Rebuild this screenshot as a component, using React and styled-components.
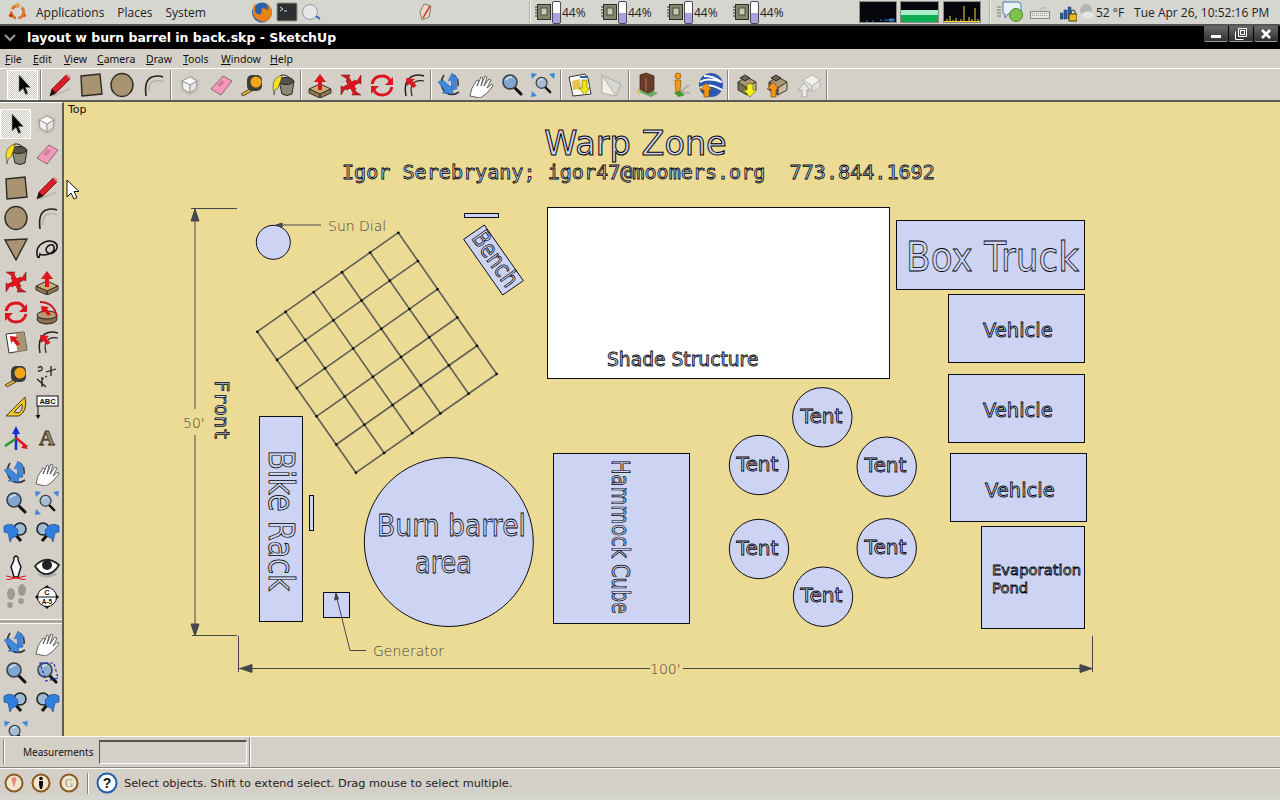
import React from "react";
import styled, { createGlobalStyle } from "styled-components";

const GlobalStyle = createGlobalStyle`
  html, body { margin: 0; padding: 0; height: 100%; overflow: hidden; background: #d6d6d0; }
  #root { height: 100%; }
`;

const Screen = styled.div`
  width: 1280px;
  height: 800px;
  display: flex;
  flex-direction: column;
  overflow: hidden;
  font-family: "DejaVu Sans", sans-serif;
  color: #111;
`;

/* ---- gnome panel ---- */
const Panel = styled.div`
  height: 24px;
  flex: none;
  display: flex;
  align-items: center;
  background: #d6d6d0;
  border-bottom: 2px solid #55554f;
  font-family: "Open Sans", sans-serif;
  font-size: 12px;
  color: #222;
`;
const PanelMenu = styled.span`
  margin-left: ${(p) => p.$left}px;
`;
const PanelIcon = styled.svg`
  flex: none;
  margin-left: ${(p) => p.$left || 0}px;
`;
const PanelSep = styled.div`
  width: 1px;
  height: 22px;
  flex: none;
  margin-left: ${(p) => p.$left}px;
  background: #aeaea8;
  border-right: 1px solid #f2f2ee;
`;
const Cpu = styled.div`
  width: 66px;
  flex: none;
  display: flex;
  align-items: center;
  gap: 1px;
  margin-left: ${(p) => p.$left || 0}px;
`;
const CpuBar = styled.div`
  width: 7px;
  height: 21px;
  border: 1px solid #4a4a58;
  border-radius: 2px;
  background: linear-gradient(#fff 0 52%, #a9a3dc 52% 100%);
`;
const Graph = styled.svg`
  flex: none;
  margin-left: ${(p) => p.$left}px;
  border: 1px solid #8c8c86;
  background: #05070c;
`;
const TrayText = styled.span`
  margin-left: ${(p) => p.$left}px;
  white-space: nowrap;
`;

/* ---- window frame ---- */
const TitleBar = styled.div`
  height: 23px;
  flex: none;
  display: flex;
  align-items: center;
  background: #000;
  color: #fff;
  font-weight: 700;
  font-size: 12.5px;
`;
const TitleChevron = styled.svg`
  margin: 0 11px 0 4px;
`;
const WinButtons = styled.div`
  margin-left: auto;
  margin-right: 2px;
  align-self: flex-start;
  display: flex;
  gap: 1px;
`;
const WinButton = styled.div`
  width: 24px;
  height: 15px;
  display: flex;
  align-items: center;
  justify-content: center;
  background: linear-gradient(#6a6a6a, #303030);
  border: solid #9a9a9a;
  border-width: 0 0 1px 0;
  border-radius: 0 0 2px 2px;
`;

const MenuBar = styled.div`
  height: 19px;
  flex: none;
  display: flex;
  align-items: center;
  background: #d4d0c8;
  border-bottom: 1px solid #fff;
  font-family: "Noto Sans", sans-serif;
  font-size: 10.5px;
`;
const MenuItem = styled.span`
  width: ${(p) => p.$w}px;
  flex: none;
  &:first-child { margin-left: 5px; }
  u { text-underline-offset: 1px; }
`;

const ToolBar = styled.div`
  height: 31px;
  flex: none;
  display: flex;
  align-items: center;
  padding-left: 7px;
  background: #d4d0c8;
  border-bottom: 2px solid #5c5a54;
`;
const ToolButton = styled.div`
  width: 31px;
  height: 30px;
  flex: none;
  display: flex;
  align-items: center;
  justify-content: center;
  box-sizing: border-box;
  ${(p) =>
    p.$active &&
    `
    border: 1px solid #fff;
    background: conic-gradient(#fff 25%, #c9c6bf 0 50%, #fff 0 75%, #c9c6bf 0) 0 0 / 2px 2px;
  `}
`;
const ToolSep = styled.div`
  width: 6px;
  height: 30px;
  flex: none;
  display: flex;
  justify-content: center;
  &::after {
    content: "";
    width: 1px;
    background: #85827b;
    border-right: 1px solid #fff;
  }
`;

const Main = styled.div`
  height: 634px;
  flex: none;
  display: flex;
`;
const LeftBar = styled.div`
  width: 62px;
  flex: none;
  display: flex;
  flex-direction: column;
  gap: 4px;
  padding-top: 6px;
  overflow: hidden;
  background: #d4d0c8;
  border-right: 2px solid #5c5a54;
  border-top: 1px solid #fff;
`;
const LeftGroup = styled.div`
  display: grid;
  grid-template-columns: 31px 31px;
  grid-auto-rows: ${(p) => p.$row || 30}px;
  flex: none;
`;
const LeftDivider = styled.div`
  height: 3px;
  flex: none;
  margin: 3px 0 0;
  border-top: 1px solid #fff;
  border-bottom: 1px solid #fff;
  background: #aaa69e;
`;
const Canvas = styled.div`
  flex: 1;
  position: relative;
  background: #ecdb94;
`;
const ViewName = styled.span`
  position: absolute;
  left: 4px;
  top: 1px;
  font-size: 11px;
`;
const Cursor = styled.svg`
  position: absolute;
  left: 2px;
  top: 77px;
`;
const Drawing = styled.svg`
  display: block;
  width: 100%;
  height: 100%;
`;

const Edge = styled.g`
  fill: #ccd3f3;
  stroke: #0c0c14;
  stroke-width: 1;
`;
const OutlineText = styled.text`
  font-family: ${(p) => (p.$mono ? '"DejaVu Sans Mono", monospace' : '"DejaVu Sans", sans-serif')};
  font-size: ${(p) => p.$size}px;
  fill: #ccd3f3;
  stroke: #000;
  stroke-width: ${(p) => p.$weight || 0.8}px;
`;
const Note = styled.text`
  font-family: "DejaVu Sans", sans-serif;
  font-weight: 200;
  font-size: 14px;
  fill: #45443e;
`;
const DimLine = styled.g`
  fill: none;
  stroke: #45474c;
  stroke-width: 1;
`;

/* ---- bottom bars ---- */
const MeasureBar = styled.div`
  height: 30px;
  flex: none;
  display: flex;
  align-items: center;
  background: #d4d0c8;
  border-top: 1px solid #fff;
  border-bottom: 1px solid #85827b;
  font-family: "Noto Sans", sans-serif;
  font-size: 10px;
`;
const Grip = styled.div`
  width: 1px;
  height: 26px;
  flex: none;
  margin-left: 3px;
  background: #85827b;
  border-right: 1px solid #fff;
`;
const MeasureLabel = styled.span`
  margin-left: 18px;
  width: 76px;
  flex: none;
`;
const MeasureInput = styled.div`
  width: 146px;
  height: 21px;
  flex: none;
  border: 1px solid;
  border-color: #55534e #fff #fff #55534e;
  border-top-width: 2px;
`;
const MeasureEnd = styled.div`
  width: 1px;
  height: 30px;
  flex: none;
  margin-left: 2px;
  background: #85827b;
  border-right: 1px solid #fff;
`;
const StatusBar = styled.div`
  height: 24px;
  padding-top: 2px;
  flex: none;
  display: flex;
  align-items: center;
  background: #d4d0c8;
  border-top: 1px solid #fff;
  font-size: 11.3px;
`;
const StatusSep = styled.div`
  width: 1px;
  height: 21px;
  flex: none;
  margin: 0 7px 0 2px;
  background: #85827b;
  border-right: 1px solid #fff;
`;
const StatusIcons = styled.svg`
  flex: none;
  margin-left: ${(p) => p.$left || 0}px;
`;
const StatusText = styled.span`
  margin-left: 6px;
  color: #222;
`;
const BottomStrip = styled.div`
  flex: 1;
  background: #d6d6d0;
`;

/* ---- toolbar icons ---- */
const Magnifier = ({ fill = "#7fa6cf" }) => (
  <>
    <path d="M15 15l7 7" stroke="#111" strokeWidth="3" strokeLinecap="round" />
    <circle cx="11" cy="10" r="7" fill={fill} stroke="#3b3f45" strokeWidth="1.6" />
    <path d="M7 8q2-3 6-3" stroke="#cfe2f4" strokeWidth="1.4" fill="none" />
  </>
);
const BlueArrows = () => (
  <g fill="#3f86dc">
    <path d="M1 1l6 1-5 5z" />
    <path d="M25 1l-6 1 5 5z" />
    <path d="M1 25l1-6 5 5z" />
  </g>
);
const Hand = () => (
  <path
    d="M2 24l2-8 5-8 2 1-2 5 4-9 2 1-2 8 4-10 2 1-3 9 5-7 2 1-4 8 5-4 1 2-7 8-6 4z"
    fill="#fff"
    stroke="#55575a"
    strokeWidth="0.9"
    strokeLinejoin="round"
  />
);
const BlueHand = ({ flip }) => (
  <g transform={flip ? "matrix(-1 0 0 1 26 0)" : undefined}>
    <circle cx="17" cy="9" r="6" fill="#9dbad6" stroke="#222" strokeWidth="1.6" />
    <path d="M11 13l7 8" stroke="#111" strokeWidth="3" />
    <path d="M1 6q4-3 9-1l5 5-1 6-5 2-2 4-2-9-4-1z" fill="#2f7fe0" stroke="#1b3d78" strokeWidth="0.6" />
  </g>
);
const Crate = () => (
  <>
    <path d="M4 10l9-5 9 5-9 6z" fill="#a89878" stroke="#3d3a33" />
    <path d="M4 10v8l9 5v-7z" fill="#7a6d55" stroke="#3d3a33" />
    <path d="M22 10v8l-9 5v-7z" fill="#c9bb9b" stroke="#3d3a33" />
    <path d="M6 6l5-3 5 3-5 3z" fill="#6f6350" stroke="#2d2a25" />
  </>
);

const ICONS = {
  select: <path d="M9 3v17l4-3.500 2.500 6 2.500-1-2.500-6h5z" fill="#000" stroke="#8d8b85" strokeWidth="0.7" />,
  box: (
    <>
      <path d="M3 9l11-6 9 5-2 12-9 4-8-5z" fill="#c6c4bd" />
      <path d="M5 9l8-4 7 4-7 4z" fill="#fff" stroke="#9a9890" />
      <path d="M5 9l1 8 7 4v-8z" fill="#f2f2f2" stroke="#9a9890" />
      <path d="M20 9l-1 8-6 4v-8z" fill="#e4e4e4" stroke="#9a9890" />
    </>
  ),
  eraser: (
    <>
      <path d="M3 17L15 4l9 5-11 14z" fill="#f49ab8" stroke="#6d5560" strokeWidth="0.8" />
      <path d="M9 13l5-5 3 2-5 5z" fill="#d07c98" />
    </>
  ),
  tape: (
    <>
      <path d="M2 22l10-6 1 3-9 5z" fill="#e0b020" stroke="#333" strokeWidth="0.8" />
      <rect x="8" y="3" width="15" height="16" rx="5" fill="#3c3c38" />
      <circle cx="17" cy="10" r="5.500" fill="#f2a718" />
    </>
  ),
  paint: (
    <>
      <path d="M9 9h15l-2 13q-5 3-10 0z" fill="#8d8775" stroke="#2d2d2a" />
      <ellipse cx="16" cy="9" rx="7.500" ry="3.500" fill="#55534a" stroke="#222" />
      <path d="M10 4q4-3 10 2" fill="none" stroke="#222" />
      <path d="M12 3Q3 6 3 14l1 9 1-5 3-2 3-8z" fill="#f8e11a" stroke="#222" strokeWidth="0.5" />
    </>
  ),
  pencil: (
    <>
      <path d="M6 24l17-7" stroke="#b8b5ad" strokeWidth="1.4" />
      <path d="M3 24l2-7L19 3l4 4L9 21z" fill="#d81f26" stroke="#5a1013" strokeWidth="0.7" />
      <path d="M3 24l2-7 4 4z" fill="#161616" />
      <path d="M19 3l4 4 1-2-3-3z" fill="#ef8ea0" />
    </>
  ),
  rect: <path d="M3 4l19-2 2 20-20 2z" fill="#a89472" stroke="#2e2a22" strokeWidth="1.4" />,
  circle: <ellipse cx="13" cy="13" rx="11" ry="11.500" fill="#a89472" stroke="#2e2a22" strokeWidth="1.4" />,
  arc: (
    <>
      <path d="M6 24Q4 8 12 5q6-2 11 0" fill="none" stroke="#222" strokeWidth="1.6" />
      <path d="M9 20Q8 11 14 9q5-1 9 1" fill="none" stroke="#b4b1aa" strokeWidth="1.4" />
    </>
  ),
  triangle: <path d="M2 5l22-1-11 21z" fill="#a89472" stroke="#2e2a22" strokeWidth="1.4" />,
  freehand: (
    <path
      d="M4 23q-3-8 2-13 7-6 14-3 5 3 2 8-4 5-8 3-4-3 0-7 5-3 6 1 1 5-5 7-7 2-9 0l-1 4"
      fill="none"
      stroke="#111"
      strokeWidth="1.5"
    />
  ),
  move: (
    <g fill="#e0141c" stroke="#5f1014" strokeWidth="0.5">
      <path d="M13 9l-5 1 1-3-6-4 9 0-1 2z" transform="rotate(0 13 13)" />
      <path d="M13 9l-5 1 1-3-6-4 9 0-1 2z" transform="rotate(90 13 13)" />
      <path d="M13 9l-5 1 1-3-6-4 9 0-1 2z" transform="rotate(180 13 13)" />
      <path d="M13 9l-5 1 1-3-6-4 9 0-1 2z" transform="rotate(270 13 13)" />
      <path d="M9 9h8v8H9z" stroke="none" />
    </g>
  ),
  pushpull: (
    <>
      <path d="M2 17l11-5 11 5-11 5z" fill="#c9ad7e" stroke="#3b3325" />
      <path d="M2 17v4l11 5v-4zM24 17v4l-11 5v-4z" fill="#8f7752" stroke="#3b3325" />
      <path d="M13 2l6 8h-4v8h-4v-8H7z" fill="#e0141c" />
    </>
  ),
  rotate: (
    <g fill="none" stroke="#e0141c" strokeWidth="3">
      <path d="M3 12q2-8 10-8 6 0 8 5" />
      <path d="M23 15q-2 8-10 8-6 0-8-5" />
      <path d="M24 5v8h-8zM2 22v-8h8z" fill="#e0141c" stroke="none" />
    </g>
  ),
  followme: (
    <>
      <ellipse cx="13" cy="20" rx="10" ry="5" fill="#8a6f4e" stroke="#222" />
      <ellipse cx="13" cy="16" rx="10" ry="4" fill="#b89a72" stroke="#222" />
      <path d="M6 3q14 0 17 15" fill="none" stroke="#c5161c" strokeWidth="1.800" />
      <path d="M7 7l8 1-2 2 4 5-3 2-4-5-2 2z" fill="#e0141c" />
    </>
  ),
  scale: (
    <>
      <path d="M3 5l18-2 3 18-18 3z" fill="#fff" stroke="#333" />
      <path d="M13 4l8-1 3 18-10 2z" fill="#a89472" />
      <path d="M7 7l8 1-2 2 4 5-3 2-4-5-2 2z" fill="#e0141c" />
    </>
  ),
  offset: (
    <>
      <path d="M6 24Q3 8 13 4q5-2 11 0" fill="none" stroke="#222" strokeWidth="1.500" />
      <path d="M12 24Q9 14 15 10q4-2 9-1" fill="none" stroke="#222" strokeWidth="1.200" />
      <path d="M6 6l9 1-2.500 2.500 4 4-3 2.500-4-4L7 14z" fill="#e0141c" />
    </>
  ),
  dimension: (
    <g stroke="#222" strokeWidth="1.300" fill="none">
      <path d="M17 3v10M12 9l10-3M3 16l9 8M8 14v10" />
      <path d="M4 5q3-3 4 0t-4 3" />
      <path d="M13 13l-6 4" strokeDasharray="2 2" />
    </g>
  ),
  protractor: (
    <>
      <path d="M3 22L22 3q3 14-6 19z" fill="#f0c52c" stroke="#4d3f10" />
      <path d="M11 18l8-8q1 6-3 9z" fill="#d4d0c8" stroke="#4d3f10" />
    </>
  ),
  label: (
    <>
      <rect x="3" y="2" width="21" height="10" fill="#fff" stroke="#111" />
      <text x="13.500" y="10" textAnchor="middle" fontSize="7.500" fontWeight="700" fontFamily="Liberation Sans, sans-serif" fill="#111">ABC</text>
      <path d="M4 12v10" stroke="#111" strokeWidth="1" />
      <path d="M1.500 21h5L4 25z" fill="#111" />
    </>
  ),
  axes: (
    <>
      <path d="M13 25V6" stroke="#1a2fd0" strokeWidth="2.500" />
      <path d="M13 1l4 8H9z" fill="#1a2fd0" />
      <path d="M2 21l12-8" stroke="#1f9a2c" strokeWidth="2.500" />
      <path d="M13 13l11 9" stroke="#e0141c" strokeWidth="2.500" />
      <path d="M25 24l-7-1 3-4z" fill="#e0141c" />
    </>
  ),
  text3d: (
    <text x="13" y="20" textAnchor="middle" fontSize="22" fontWeight="700" fontFamily="Liberation Serif, serif" fill="#9c8a66" stroke="#3a3224" strokeWidth="0.8">A</text>
  ),
  orbit: (
    <>
      <path d="M7 3q-6 9 1 17 7 5 14 0" fill="none" stroke="#333" strokeWidth="1.600" />
      <path d="M17 3q5 5 4 11" fill="none" stroke="#333" strokeWidth="1.600" />
      <path d="M1 10l5-2 8 7 1-3 1 10-11-1 3-2z" fill="#3f86dc" stroke="#1b4d90" strokeWidth="0.4" />
      <path d="M15 1l7 7-3 0 1 9-5 1-1-10-3 1z" fill="#3f86dc" stroke="#1b4d90" strokeWidth="0.4" />
    </>
  ),
  pan: <Hand />,
  zoom: <Magnifier />,
  extents: (
    <>
      <g transform="translate(3 3) scale(.78)"><Magnifier fill="#a5bdd3" /></g>
      <BlueArrows />
    </>
  ),
  zoomwindow: (
    <>
      <Magnifier fill="#8fb0d0" />
      <path d="M6 3h14l4 15-12 3z" fill="none" stroke="#1a2fd0" strokeWidth="1.200" strokeDasharray="3 2" />
    </>
  ),
  prev: <BlueHand />,
  next: <BlueHand flip />,
  walk: (
    <>
      <path d="M13 2q3 1 2 4l3 7-1 3-2 7h-4l-2-7-1-3 3-7q-1-3 2-4z" fill="#f4f4f4" stroke="#111" strokeWidth="1.400" />
      <path d="M3 22l20 4M3 26l20-4" stroke="#e0141c" strokeWidth="1" />
    </>
  ),
  eye: (
    <>
      <path d="M1 12Q12 0 25 11q-6 10-14 9-6-1-10-8z" fill="#fff" stroke="#222" strokeWidth="1.800" />
      <circle cx="13" cy="11" r="5" fill="#222" />
      <path d="M4 20q8 5 18 0" stroke="#aaa" strokeWidth="2" fill="none" />
    </>
  ),
  steps: (
    <g fill="#9c9a94">
      <ellipse cx="8" cy="10" rx="4" ry="6" />
      <ellipse cx="7" cy="21" rx="2.800" ry="3" />
      <ellipse cx="19" cy="6" rx="4" ry="6" />
      <ellipse cx="18" cy="17" rx="2.800" ry="3" />
    </g>
  ),
  sectionMark: (
    <>
      <path d="M1 13L13 1l12 12-12 12z" fill="#111" />
      <circle cx="13" cy="13" r="9.500" fill="#fff" stroke="#111" />
      <path d="M3 13h20" stroke="#111" />
      <text x="13" y="11" textAnchor="middle" fontSize="7.500" fontWeight="700" fontFamily="Liberation Sans, sans-serif" fill="#111">C</text>
      <text x="13" y="20" textAnchor="middle" fontSize="6.500" fontWeight="700" fontFamily="Liberation Sans, sans-serif" fill="#111">A-5</text>
    </>
  ),
  location: (
    <>
      <path d="M2 5l16-3 3 4 3 16-18 2z" fill="#fff" stroke="#333" />
      <path d="M5 9l8-2 1 10-8 1z" fill="#e8c34a" />
      <path d="M13 4h8v2h-8z" fill="#2f5fa0" />
      <path d="M15 8h5v8h3l-5.500 7L12 16h3z" fill="#f4e21a" stroke="#6a5d10" strokeWidth="0.6" />
    </>
  ),
  toggle: (
    <>
      <path d="M4 3l19 9-5 12-14-3z" fill="#d8d8d2" stroke="#b0aea6" />
      <path d="M4 3v18l14 3z" fill="#eeeeea" stroke="#b0aea6" />
    </>
  ),
  building: (
    <>
      <path d="M1 19l7-4 15 6-7 4z" fill="#6fa860" />
      <path d="M5 3l6-2 8 3v14l-6 3-8-4z" fill="#6b3b2a" stroke="#33201a" strokeWidth="0.7" />
      <path d="M11 6v13" stroke="#a37a62" />
      <path d="M1 17l5 2-2 4z" fill="#e8c34a" />
    </>
  ),
  person: (
    <>
      <path d="M14 20l9-7M14 20l10 1" stroke="#a5a39c" strokeWidth="1.500" />
      <circle cx="12" cy="4" r="3" fill="#f39b12" stroke="#7a4d08" strokeWidth="0.6" />
      <path d="M9 8h6l-1 12h-4z" fill="#f39b12" stroke="#7a4d08" strokeWidth="0.6" />
      <path d="M8 21l5-2 6 4-6 2z" fill="#3e9a2a" />
    </>
  ),
  globe: (
    <>
      <circle cx="14" cy="13" r="12" fill="#2a58b0" />
      <path d="M3 10q7-5 22 0M3 16q9-6 22 2M7 4q9 0 16 5" stroke="#fff" strokeWidth="2" fill="none" />
      <path d="M9 11l6 7h-3v7H7v-7H3z" fill="#f4931a" stroke="#6b3f07" strokeWidth="0.6" />
    </>
  ),
  download: (
    <>
      <Crate />
      <path d="M13 12h6v6h3.500L16 25l-6.500-7H13z" fill="#f4ee1a" stroke="#5d5608" strokeWidth="0.6" />
    </>
  ),
  upload: (
    <>
      <Crate />
      <path d="M8 10l6 7h-3v8H6v-8H2z" fill="#f4931a" stroke="#6b3f07" strokeWidth="0.6" />
    </>
  ),
  uploadOff: (
    <>
      <path d="M7 8l9-5 8 5-8 6z" fill="#f0f0ec" stroke="#bbb9b2" />
      <path d="M7 8v8l9 4v-6zM24 8v8l-8 4v-6z" fill="#e2e2dc" stroke="#bbb9b2" />
      <path d="M8 11l6 7h-3v7H6v-7H2z" fill="#e8e8e4" stroke="#aaa8a1" />
    </>
  ),
};

const Tool = ({ name, active }) => (
  <ToolButton $active={active}>
    <svg width="26" height="26" viewBox="0 0 26 26">{ICONS[name]}</svg>
  </ToolButton>
);

const TOP_GROUPS = [
  [["select", true]],
  [["pencil"], ["rect"], ["circle"], ["arc"]],
  [["box"], ["eraser"], ["tape"], ["paint"]],
  [["pushpull"], ["move"], ["rotate"], ["offset"]],
  [["orbit"], ["pan"], ["zoom"], ["extents"]],
  [["location"], ["toggle"]],
  [["building"], ["person"], ["globe"]],
  [["download"], ["upload"], ["uploadOff"]],
];

const LEFT_GROUPS = [
  { tools: ["select", "box", "paint", "eraser"] },
  { tools: ["rect", "pencil", "circle", "arc", "triangle", "freehand"] },
  { tools: ["move", "pushpull", "rotate", "followme", "scale", "offset"] },
  { tools: ["tape", "dimension", "protractor", "label", "axes", "text3d"], row: 31 },
  { tools: ["orbit", "pan", "zoom", "extents", "prev", "next"] },
  { tools: ["walk", "eye", "steps", "sectionMark"] },
];

const MENUS = [
  ["File", 28], ["Edit", 31], ["View", 33], ["Camera", 49], ["Draw", 37],
  ["Tools", 38], ["Window", 49], ["Help", 30],
];

/* ---- the drawing ---- */
const lerp = (a, b, t) => [a[0] + (b[0] - a[0]) * t, a[1] + (b[1] - a[1]) * t];
const GRID = { left: [257.3, 331.7], top: [398.3, 232.7], right: [496.7, 374], bottom: [356, 472.7] };
const CELLS = [0, 1, 2, 3, 4, 5].map((i) => i / 5);

const Mesh = () => (
  <g>
    {CELLS.map((t) => {
      const a = lerp(GRID.left, GRID.top, t);
      const b = lerp(GRID.bottom, GRID.right, t);
      const c = lerp(GRID.left, GRID.bottom, t);
      const d = lerp(GRID.top, GRID.right, t);
      return (
        <g key={t} stroke="#5f5f58" strokeWidth="1.600">
          <line x1={a[0]} y1={a[1]} x2={b[0]} y2={b[1]} />
          <line x1={c[0]} y1={c[1]} x2={d[0]} y2={d[1]} />
        </g>
      );
    })}
    {CELLS.flatMap((t) =>
      CELLS.map((s) => {
        const p = lerp(lerp(GRID.left, GRID.top, t), lerp(GRID.bottom, GRID.right, t), s);
        return <circle key={`${t}-${s}`} cx={p[0]} cy={p[1]} r="1.300" fill="#000" />;
      })
    )}
  </g>
);

const TENTS = [
  [822.3, 417.3, 800.5, 423],
  [759, 465, 736.5, 471],
  [886.7, 466.7, 864.5, 472],
  [759, 549, 736.5, 555],
  [886.7, 548.3, 864.5, 554],
  [823, 596.7, 800.5, 602],
];

const Squeezed = ({ width, ...rest }) => (
  <OutlineText textLength={width} lengthAdjust="spacingAndGlyphs" {...rest} />
);

const Plan = () => (
  <Drawing viewBox="64 102 1216 634">
    <OutlineText $size={33.500} $weight={1} x="635.500" y="155" textAnchor="middle">Warp Zone</OutlineText>
    <OutlineText $mono $size={20.100} x="342" y="179" xmlSpace="preserve">Igor Serebryany; igor47@moomers.org  773.844.1692</OutlineText>

    <OutlineText $mono $size={20} transform="rotate(90 215 380)" x="215" y="380">Front</OutlineText>

    <Edge>
      <circle cx="273.300" cy="242.300" r="17" />
      <rect x="464.500" y="213.500" width="34" height="4" />
      <polygon points="484.300,225 523.300,280.700 502.700,295 463.700,239.300" />
      <rect x="547.500" y="207.500" width="342" height="171" fill="#fff" />
      <rect x="896.500" y="220.500" width="188" height="69" />
      <rect x="948.500" y="294.500" width="136" height="68" />
      <rect x="948.500" y="374.500" width="136" height="68" />
      <rect x="950.500" y="453.500" width="136" height="68" />
      <rect x="981.500" y="526.500" width="103" height="102" />
      <rect x="259.500" y="416.500" width="43" height="205" />
      <rect x="309.500" y="495.500" width="4" height="35" />
      <rect x="323.500" y="592.500" width="26" height="25" />
      <circle cx="448.800" cy="542" r="84.500" />
      <rect x="553.500" y="453.500" width="136" height="170" />
      {TENTS.map(([cx, cy]) => <circle key={`${cx}${cy}`} cx={cx} cy={cy} r="29.700" />)}
    </Edge>

    <Mesh />

    <DimLine>
      <path d="M237 208.500h-46M195 208v201M195 435v200M192 635.500h45" />
      <path d="M238.500 636v36M239 668.500h411M683 668.500h409M1092.500 636v36" />
      <path d="M195 209l-4 12h8zM195 636l-4-12h8zM240 668.500l12-4v8zM1092 668.500l-12-4v8z" fill="#45474c" />
      <path d="M321 225h-45M366 650.500h-16l-14-56" />
      <path d="M276 225l6-2v4zM336 593l-1.500 7 4-1z" fill="#45474c" />
    </DimLine>
    <Note x="183" y="428">50'</Note>
    <Note x="650" y="674">100'</Note>
    <Note x="328" y="231">Sun Dial</Note>
    <Note x="373" y="656">Generator</Note>

    <Squeezed $size={24} width={62} transform="rotate(55 471 238)" x="471" y="238">Bench</Squeezed>
    <OutlineText $size={18.700} x="607" y="366">Shade Structure</OutlineText>
    <Squeezed $size={41} width={173} x="906" y="271">Box Truck</Squeezed>
    <OutlineText $size={19.500} x="983" y="337">Vehicle</OutlineText>
    <OutlineText $size={19.500} x="983" y="417">Vehicle</OutlineText>
    <OutlineText $size={19.500} x="985" y="497">Vehicle</OutlineText>
    <OutlineText $size={14.800} x="992" y="575">Evaporation</OutlineText>
    <OutlineText $size={14.800} x="992" y="593">Pond</OutlineText>
    {TENTS.map(([cx, cy, x, y]) => (
      <Squeezed key={`${x}${y}`} $size={19.500} width={42} x={x} y={y}>Tent</Squeezed>
    ))}
    <Squeezed $size={36} width={141} transform="rotate(90 269 450)" x="269" y="450">Bike Rack</Squeezed>
    <Squeezed $size={25} width={154} transform="rotate(90 612 460)" x="612" y="460">Hammock Cube</Squeezed>
    <Squeezed $size={31} width={149} x="377" y="536">Burn barrel</Squeezed>
    <Squeezed $size={31} width={57} x="415" y="573">area</Squeezed>
  </Drawing>
);

const CpuChip = () => (
  <svg width="16" height="18" viewBox="0 0 16 18">
    <rect x="2.500" y="1.500" width="13" height="15" fill="#83876f" stroke="#2d2f26" />
    <rect x="6" y="5" width="6" height="7" fill="#c9ccb5" stroke="#4a4c3e" />
    <path d="M0 4h2M0 7h2M0 10h2M0 13h2" stroke="#2d2f26" />
  </svg>
);

const App = () => (
  <Screen>
    <GlobalStyle />
    <Panel>
      <PanelIcon $left={8} width="19" height="20" viewBox="0 0 20 20">
        <circle cx="10" cy="10" r="6.500" fill="none" stroke="#d9772f" strokeWidth="3" strokeDasharray="9 2.500" />
        <circle cx="10" cy="2.500" r="2" fill="#e9a23a" />
        <circle cx="3" cy="13.500" r="2" fill="#c8381c" />
        <circle cx="17" cy="13.500" r="2" fill="#e0651e" />
      </PanelIcon>
      <PanelMenu $left={9}>Applications</PanelMenu>
      <PanelMenu $left={13}>Places</PanelMenu>
      <PanelMenu $left={13}>System</PanelMenu>
      <PanelIcon $left={45} width="22" height="23" viewBox="0 0 22 22">
        <circle cx="11" cy="11" r="10" fill="#2b5fa8" />
        <path d="M3 3q-3 9 2 14 6 5 12 2 4-3 4-9-1-6-6-8 3 3 2 7-3-3-7-2 2 4-1 6-4 0-5-4 0-4 1-6z" fill="#e8801c" />
      </PanelIcon>
      <PanelIcon $left={3} width="22" height="20" viewBox="0 0 22 20">
        <rect x="1" y="1" width="20" height="18" rx="1" fill="#2c2f30" stroke="#8f8f88" />
        <path d="M4 5l3 2-3 2M8 9h3" stroke="#ddd" fill="none" />
      </PanelIcon>
      <PanelIcon $left={3} width="20" height="18" viewBox="0 0 20 18">
        <circle cx="9" cy="9" r="7.500" fill="#e4e6e8" stroke="#9a9c9e" />
        <path d="M15 13l4 3" stroke="#3a66b0" strokeWidth="2" />
      </PanelIcon>
      <PanelIcon $left={96} width="16" height="18" viewBox="0 0 16 18">
        <path d="M7 1l7 2-2 11-7 3-2-8z" fill="#e8dcc8" stroke="#8a7a68" />
        <path d="M6 15L13 3" stroke="#cc3a30" strokeWidth="1.500" />
      </PanelIcon>
      <PanelSep $left={96} />
      <Cpu $left={4}>
        <CpuChip /><CpuBar /><span>44%</span>
      </Cpu>
      {[1, 2, 3].map((n) => (
        <Cpu key={n}>
          <CpuChip /><CpuBar /><span>44%</span>
        </Cpu>
      ))}
      <Graph $left={60} width="36" height="20" viewBox="0 0 36 20">
        <path d="M6 19h2M12 19h2M20 18h1v1M24 18h4M29 17h5v2h-5z" stroke="#2a7fc0" fill="#2a7fc0" />
      </Graph>
      <Graph $left={3} width="37" height="20" viewBox="0 0 37 20">
        <rect x="0" y="8" width="37" height="5" fill="#a8ecc8" />
        <rect x="0" y="13" width="37" height="7" fill="#0fae55" />
      </Graph>
      <Graph $left={4} width="36" height="20" viewBox="0 0 36 20">
        <path d="M3 20v-3M6 20v-6M9 20v-2M12 20v-4M17 20v-3M20 20V4M25 20v-5M28 20v-3M31 20V6M34 20v-3" stroke="#f4d83a" />
        <rect x="0" y="19" width="36" height="1" fill="#f4d83a" />
      </Graph>
      <PanelSep $left={8} />
      <PanelIcon $left={6} width="4" height="12" viewBox="0 0 4 12">
        <path d="M0 1h4M0 4h4M0 7h4M0 10h4" stroke="#77776f" />
      </PanelIcon>
      <PanelIcon $left={0} width="24" height="22" viewBox="0 0 24 22">
        <path d="M2 1h15q3 0 3 3v7q0 2-3 2H7l-3 4v-4q-2 0-2-2z" fill="#e8f0f8" stroke="#4a7ab0" />
        <circle cx="15" cy="14" r="6.500" fill="#7dc04a" stroke="#4d8a2a" />
      </PanelIcon>
      <PanelIcon $left={5} width="20" height="14" viewBox="0 0 20 14">
        <rect x="0.500" y="6.500" width="19" height="7" fill="#e6e6e0" stroke="#8a8a84" />
        <path d="M2 8.500h16M2 10.500h16" stroke="#9a9a94" strokeDasharray="1 1" />
        <path d="M10 6Q10 2 16 3" fill="none" stroke="#aaa" />
      </PanelIcon>
      <PanelIcon $left={10} width="17" height="20" viewBox="0 0 17 20">
        <path d="M0 11h3v6H0zM4 8h3v9H4zM8 5h3v12H8z" fill="#2f5fa0" stroke="#17335c" strokeWidth="0.5" />
        <rect x="9" y="12" width="8" height="7" fill="#e8b820" stroke="#4a3c0c" />
        <path d="M11 12V9q2-2 4 0v3" fill="none" stroke="#333" />
      </PanelIcon>
      <PanelIcon $left={2} width="15" height="20" viewBox="0 0 15 20">
        <circle cx="7" cy="8" r="6" fill="#b4b4b0" />
        <ellipse cx="9" cy="13" rx="6" ry="3.500" fill="#e6e6e4" />
      </PanelIcon>
      <TrayText $left={2}>52 °F</TrayText>
      <TrayText $left={10}>Tue Apr 26, 10:52:16 PM</TrayText>
    </Panel>

    <TitleBar>
      <TitleChevron width="12" height="8" viewBox="0 0 12 8">
        <path d="M1 1l5 5 5-5" fill="none" stroke="#9a9a9a" strokeWidth="2" />
      </TitleChevron>
      layout w burn barrel in back.skp - SketchUp
      <WinButtons>
        <WinButton>
          <svg width="12" height="10" viewBox="0 0 12 10"><rect x="1" y="6" width="10" height="3" fill="#fff" /></svg>
        </WinButton>
        <WinButton>
          <svg width="12" height="12" viewBox="0 0 12 12"><path d="M3.500.5h8v8h-8zM.5 3.500v8h8" fill="none" stroke="#fff" /><rect x="5.500" y="2.500" width="4" height="4" fill="none" stroke="#fff" /></svg>
        </WinButton>
        <WinButton>
          <svg width="12" height="12" viewBox="0 0 12 12"><path d="M2 2l8 8M10 2l-8 8" stroke="#fff" strokeWidth="2.500" /></svg>
        </WinButton>
      </WinButtons>
    </TitleBar>

    <MenuBar>
      {MENUS.map(([label, w]) => (
        <MenuItem key={label} $w={w}><u>{label[0]}</u>{label.slice(1)}</MenuItem>
      ))}
    </MenuBar>

    <ToolBar>
      {TOP_GROUPS.map((group, i) => (
        <React.Fragment key={i}>
          {group.map(([name, active]) => <Tool key={name} name={name} active={active} />)}
          <ToolSep />
        </React.Fragment>
      ))}
    </ToolBar>

    <Main>
      <LeftBar>
        {LEFT_GROUPS.map((group, i) => (
          <LeftGroup key={i} $row={group.row}>
            {group.tools.map((name, j) => <Tool key={name} name={name} active={i === 0 && j === 0} />)}
          </LeftGroup>
        ))}
        <LeftDivider />
        <LeftGroup>
          {["orbit", "pan", "zoom", "zoomwindow", "prev", "next", "extents"].map((name) => <Tool key={name} name={name} />)}
        </LeftGroup>
      </LeftBar>
      <Canvas>
        <Plan />
        <ViewName>Top</ViewName>
        <Cursor width="14" height="22" viewBox="0 0 14 22">
          <path d="M1 1v17l4-4 3 6 3-1.500-3-6h5z" fill="#fff" stroke="#111" />
        </Cursor>
      </Canvas>
    </Main>

    <MeasureBar>
      <Grip />
      <MeasureLabel>Measurements</MeasureLabel>
      <MeasureInput />
      <MeasureEnd />
    </MeasureBar>
    <StatusBar>
      <StatusIcons $left={3} width="82" height="22" viewBox="0 0 82 22">
        <g fill="#efe6d0" stroke="#8a5a22" strokeWidth="2">
          <circle cx="11" cy="11" r="8.500" />
          <circle cx="38" cy="11" r="8.500" />
          <circle cx="66" cy="11" r="8.500" />
        </g>
        <path d="M11 5a2.500 2.500 0 0 1 2.500 2.500L11 16 8.500 7.500A2.500 2.500 0 0 1 11 5z" fill="#e88f7a" />
        <circle cx="38" cy="6.500" r="1.800" fill="#111" />
        <path d="M36 9h4v4l-1 4h-2l-1-4z" fill="#111" />
        <text x="66" y="15" textAnchor="middle" fontSize="12" fontFamily="Liberation Serif, serif" fill="#9a9a90">G</text>
      </StatusIcons>
      <StatusSep />
      <StatusIcons width="22" height="22" viewBox="0 0 22 22">
        <circle cx="11" cy="11" r="9.500" fill="#fff" stroke="#1c5fb0" strokeWidth="2" />
        <text x="11" y="16" textAnchor="middle" fontSize="14" fontWeight="700" fontFamily="Liberation Sans, sans-serif" fill="#111">?</text>
      </StatusIcons>
      <StatusText>Select objects. Shift to extend select. Drag mouse to select multiple.</StatusText>
    </StatusBar>
    <BottomStrip />
  </Screen>
);

export default App;
